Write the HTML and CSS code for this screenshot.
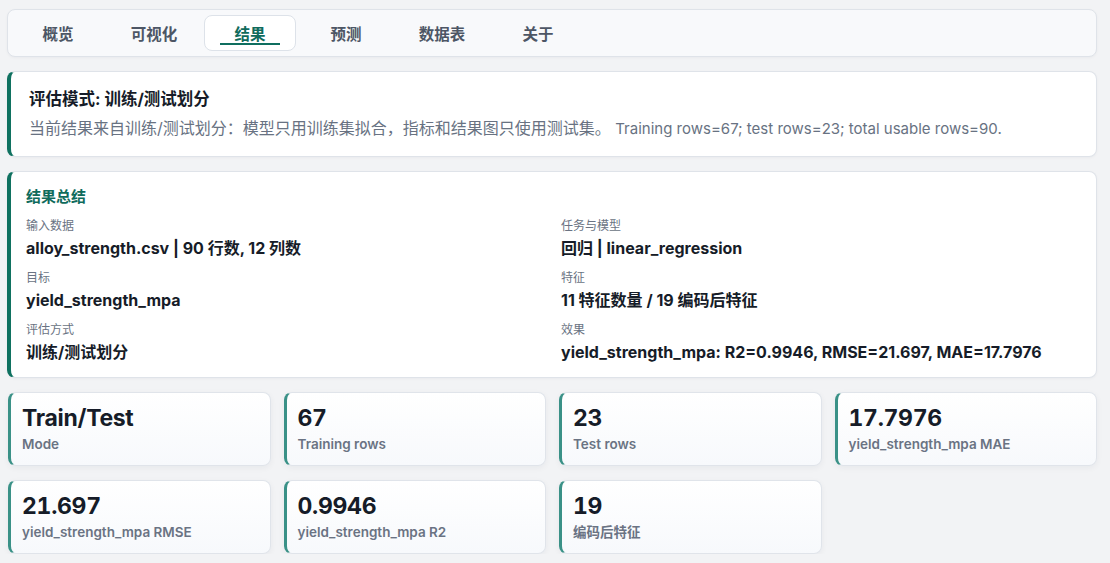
FILE: index.html
```html
<!DOCTYPE html>
<html lang="zh-CN">
<head>
<meta charset="utf-8">
<title>结果</title>
<link rel="stylesheet" href="styles.css">
</head>
<body>
<div class="page">
  <nav class="tabs">
    <div class="tab">概览</div>
    <div class="tab">可视化</div>
    <div class="tab active">结果</div>
    <div class="tab">预测</div>
    <div class="tab">数据表</div>
    <div class="tab">关于</div>
  </nav>

  <section class="card notice">
    <div class="notice-title">评估模式: 训练/测试划分</div>
    <div class="notice-text">当前结果来自训练/测试划分：模型只用训练集拟合，指标和结果图只使用测试集。 <span class="latin">Training rows=67; test rows=23; total usable rows=90.</span></div>
  </section>

  <section class="card summary">
    <div class="summary-title">结果总结</div>
    <div class="summary-grid">
      <div class="item"><div class="label">输入数据</div><div class="value">alloy_strength.csv | 90 行数, 12 列数</div></div>
      <div class="item"><div class="label">任务与模型</div><div class="value">回归 | linear_regression</div></div>
      <div class="item"><div class="label">目标</div><div class="value">yield_strength_mpa</div></div>
      <div class="item"><div class="label">特征</div><div class="value">11 特征数量 / 19 编码后特征</div></div>
      <div class="item"><div class="label">评估方式</div><div class="value">训练/测试划分</div></div>
      <div class="item"><div class="label">效果</div><div class="value">yield_strength_mpa: R2=0.9946, RMSE=21.697, MAE=17.7976</div></div>
    </div>
  </section>

  <section class="metrics">
    <div class="metric"><div class="m-value">Train/Test</div><div class="m-label">Mode</div></div>
    <div class="metric"><div class="m-value">67</div><div class="m-label">Training rows</div></div>
    <div class="metric"><div class="m-value">23</div><div class="m-label">Test rows</div></div>
    <div class="metric"><div class="m-value">17.7976</div><div class="m-label">yield_strength_mpa MAE</div></div>
    <div class="metric"><div class="m-value">21.697</div><div class="m-label">yield_strength_mpa RMSE</div></div>
    <div class="metric"><div class="m-value">0.9946</div><div class="m-label">yield_strength_mpa R2</div></div>
    <div class="metric"><div class="m-value">19</div><div class="m-label">编码后特征</div></div>
  </section>
</div>
</body>
</html>
```

FILE: styles.css
```css
* { box-sizing: border-box; }

html, body {
  margin: 0;
  padding: 0;
  background: #f2f3f5;
  font-family: Inter, "Noto Sans CJK SC", "Noto Sans", sans-serif;
  color: #1c2230;
}

.page {
  padding: 9px 13px 0 7px;
  display: flex;
  flex-direction: column;
  gap: 14px;
}

.tabs {
  display: flex;
  gap: 4px;
  height: 48px;
  padding: 5px 4px;
  background: #f8f9fb;
  border: 1px solid #dfe3e9;
  border-radius: 8px;
  box-shadow: 0 1px 3px rgba(20, 30, 50, 0.04);
}

.tab {
  position: relative;
  width: 92px;
  height: 36px;
  display: flex;
  align-items: center;
  justify-content: center;
  font-size: 15.5px;
  font-weight: 600;
  color: #4d5665;
  border: 1px solid transparent;
  border-radius: 8px;
}

.tab.active {
  background: #ffffff;
  border-color: #dde2e9;
  color: #0f6b5c;
}

.tab.active::after {
  content: "";
  position: absolute;
  left: 15px;
  right: 15px;
  bottom: 5px;
  height: 2px;
  background: #0f6e5f;
}

.card {
  background: #ffffff;
  border: 1px solid #dfe3e9;
  border-left: 4px solid #0f7160;
  border-radius: 8px;
  box-shadow: 0 1px 3px rgba(20, 30, 50, 0.04);
}

.notice {
  height: 86px;
  padding: 16px 18px 0 18px;
}

.notice-title {
  font-size: 16.5px;
  font-weight: 700;
  line-height: 22px;
  color: #161c28;
}

.notice-text {
  margin-top: 7px;
  font-size: 16px;
  line-height: 22px;
  color: #687282;
}

.notice-text .latin {
  font-size: 15px;
}

.summary {
  padding: 15px 15px 14px 15px;
}

.summary-title {
  font-size: 15px;
  font-weight: 700;
  line-height: 20px;
  color: #0f6b5c;
  margin-bottom: 11px;
}

.summary-grid {
  display: grid;
  grid-template-columns: 1fr 1fr;
  column-gap: 15px;
  row-gap: 11px;
}

.label {
  font-size: 12px;
  line-height: 16px;
  color: #6a7383;
  margin-bottom: 3px;
}

.value {
  font-size: 16px;
  font-weight: 700;
  line-height: 22px;
  color: #161c28;
}

.metrics {
  padding-left: 1px;
  display: grid;
  grid-template-columns: repeat(4, 1fr);
  column-gap: 13px;
  row-gap: 14px;
}

.metric {
  height: 74px;
  padding: 11px 11px 0 11px;
  background: linear-gradient(180deg, #ffffff 0%, #f7f9fc 100%);
  border: 1px solid #e0e4ea;
  border-left: 3px solid #3a9187;
  border-radius: 8px;
  box-shadow: 0 2px 6px rgba(20, 30, 50, 0.05);
}

.m-value {
  font-size: 23px;
  font-weight: 700;
  line-height: 28px;
  color: #161c28;
  letter-spacing: -0.3px;
  font-variant-numeric: tabular-nums;
}

.m-label {
  margin-top: 4px;
  font-size: 13.5px;
  font-weight: 600;
  line-height: 16px;
  color: #6a7383;
}
```
